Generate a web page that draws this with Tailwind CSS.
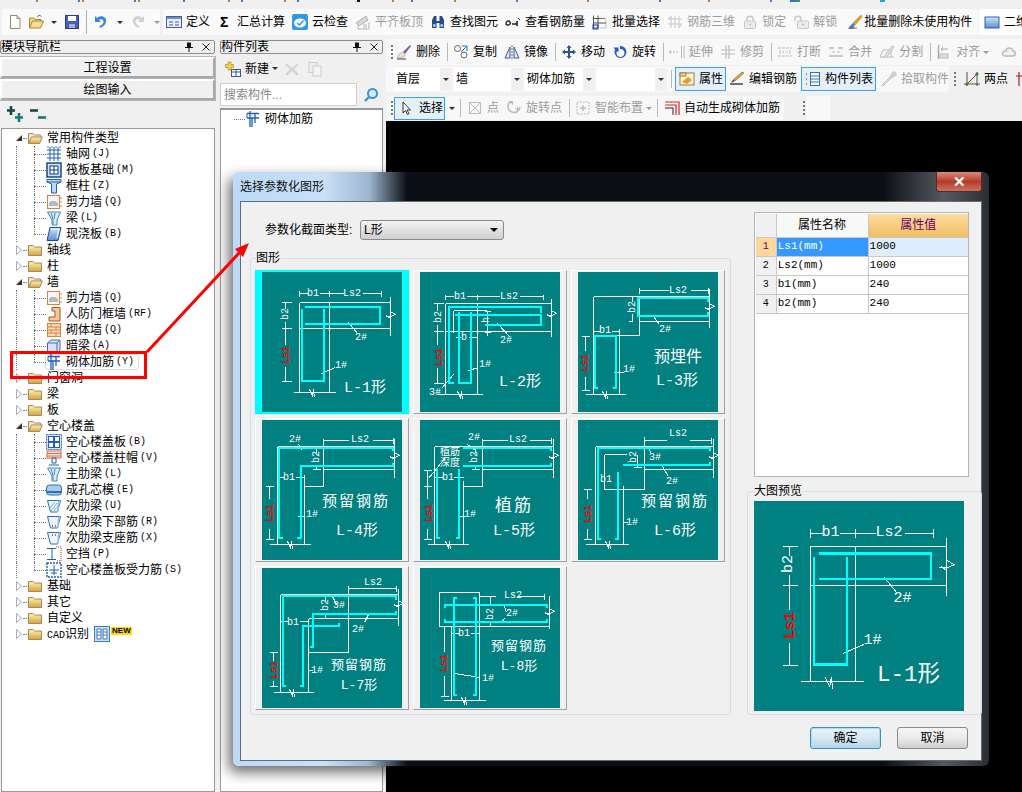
<!DOCTYPE html>
<html lang="en">
<head>
  <meta charset="UTF-8">
  <title>选择参数化图形</title>
  <script src="https://cdn.jsdelivr.net/npm/@tailwindcss/browser@4"></script>
</head>
<body class="bg-[#f0f0f0]">
<div id="app" class="relative flex h-[792px] w-[1022px] flex-col overflow-hidden bg-[#f0f0f0] font-['Liberation_Sans','Noto_Sans_CJK_SC',sans-serif] text-[12px] leading-none text-black">

  <svg width="0" height="0" class="absolute">
    <defs>
      <linearGradient id="fold" x1="0" y1="0" x2="0" y2="1"><stop offset="0" stop-color="#fff3b8"/><stop offset="1" stop-color="#e0a030"/></linearGradient>
      <linearGradient id="blue" x1="0" y1="0" x2="0" y2="1"><stop offset="0" stop-color="#cfe2f8"/><stop offset="1" stop-color="#5d8fd0"/></linearGradient>
    </defs>
  </svg>

  <!-- cut off menu bar -->
  <div id="menuMarks" class="h-[9px] shrink-0"></div>

  <div id="mainToolbar" class="flex h-[26px] shrink-0 items-center"></div>

  <div class="flex min-h-0 flex-1">
    <!-- module nav -->
    <div class="flex w-[215px] shrink-0 flex-col pt-[5px]">
      <div id="navHead"></div>
      <button class="mt-[3px] h-[21px] shrink-0 border-2 border-[#a8a8a8] border-l-white border-t-white bg-[#f0f0f0] outline outline-1 outline-[#b5b5b5]">工程设置</button>
      <button class="mt-px h-[21px] shrink-0 border-2 border-[#a8a8a8] border-l-white border-t-white bg-[#f0f0f0] outline outline-1 outline-[#b5b5b5]">绘图输入</button>
      <div class="flex h-[28px] shrink-0 items-center gap-[7px] pl-[7px]" id="expandIcons"></div>
      <div id="tree" class="ml-px min-h-0 flex-1 border border-[#9a9a9a] bg-white pt-[1px]"></div>
    </div>

    <!-- component list -->
    <div class="ml-[5px] flex w-[163px] shrink-0 flex-col pt-[5px]">
      <div id="listHead"></div>
      <div id="listTools" class="mt-[2px] flex h-[25px] shrink-0 items-center pl-[5px]"></div>
      <div class="mt-[2px] flex h-[23px] shrink-0 items-center">
        <div class="flex h-[23px] w-[137px] items-center border border-[#d0d0d0] bg-white pl-[3px] text-[#8a8a8a]">搜索构件...</div>
        <span id="searchIcon" class="ml-[6px]"></span>
      </div>
      <div id="compList" class="mt-[2px] min-h-0 flex-1 border border-t-2 border-[#9a9a9a] bg-white pl-[13px] pt-[1px]"></div>
    </div>

    <!-- drawing tools and canvas -->
    <div class="ml-[3px] flex min-w-0 flex-1 flex-col pt-[4px]">
      <div id="rowEdit" class="flex h-[26px] shrink-0 items-center gap-[7px] whitespace-nowrap rounded-l-[3px] bg-[#f8f8f8] pl-[5px]"></div>
      <div class="mt-px flex h-[26px] shrink-0 items-center whitespace-nowrap">
        <div id="rowProps" class="flex h-[26px] w-[567px] items-center rounded-[3px] bg-[#f8f8f8] pl-[8px]"></div>
        <div id="rowDraw" class="flex h-[26px] flex-1 items-center gap-[8px] pl-[5px]"></div>
      </div>
      <div class="mt-[4px] flex h-[24px] shrink-0 items-center whitespace-nowrap">
        <div id="rowSelect" class="flex h-[24px] w-[398px] items-center gap-[7px] rounded-[3px] bg-[#f8f8f8] pl-[5px]"></div>
        <span class="ml-[19px] h-[14px] w-[2px] border-l-2 border-dotted border-[#777]"></span>
        <span class="ml-px h-[24px] w-[24px] bg-[#f8f8f8]"></span>
      </div>
      <div class="mt-px min-h-0 flex-1 bg-black"></div>
    </div>
  </div>

  <!-- dialog -->
  <div class="absolute left-[233px] top-[172px] flex h-[594px] w-[756px] flex-col rounded-[6px] bg-[linear-gradient(90deg,#bcd9f6_0%,#c9e0f7_12%,#9db6cf_18%,#0b0f14_23%,#0b0f14_86%,#555a60_94%,#2a2e33_100%)] px-[7px] pb-[5px] shadow-[-4px_6px_14px_rgba(0,0,0,0.6)]">
    <div class="relative flex h-[29px] shrink-0 items-center">
      <span class="text-[12px] text-[#111]">选择参数化图形</span>
      <span class="absolute -right-[0px] top-0 flex h-[20px] w-[46px] items-center justify-center rounded-b-[3px] border border-t-0 border-[#5a2a24] bg-linear-to-b from-[#d98a7c] via-[#b8392a] to-[#c9705f] text-[15px] font-bold text-white">✕</span>
    </div>
    <div class="flex min-h-0 flex-1 flex-col border border-[#5d6d7c] bg-[#f0f0f0]">
      <div class="flex h-[513px] shrink-0">
        <div class="ml-[9px] flex w-[481px] shrink-0 flex-col pt-[18px]">
          <div class="flex h-[20px] shrink-0 items-center pl-[15px]">
            <span class="w-[95px]">参数化截面类型:</span>
            <div class="flex h-[20px] w-[144px] items-center justify-between rounded-[3px] border border-[#8a8a8a] bg-linear-to-b from-[#f4f4f4] to-[#cfcfcf] pl-[3px] pr-[5px]">
              <span>L形</span><span class="h-0 w-0 border-x-[4px] border-t-[4px] border-x-transparent border-t-black"></span>
            </div>
          </div>
          <div class="relative mt-[18px] h-[457px] rounded-[3px] border border-[#d5dfe5] pl-[4px] pt-[11px]">
            <span class="absolute -top-[7px] left-[5px] bg-[#f0f0f0] pr-[1px]">图形</span>
            <div id="tiles" class="grid grid-cols-[repeat(3,154px)] gap-x-[4px] gap-y-[4px]"></div>
          </div>
        </div>
        <div class="ml-[16px] flex w-[235px] shrink-0 flex-col pt-[10px]">
          <div class="ml-[7px] h-[265px] w-[215px] shrink-0 border border-[#b5b5b5] bg-white p-px">
            <table class="w-[212px] table-fixed border-collapse text-[12px]">
              <colgroup><col class="w-[20px]"><col class="w-[91px]"><col class="w-[99px]"></colgroup>
              <thead>
                <tr class="h-[23px]">
                  <th class="border border-[#c8c8c8] border-l-0 border-t-0 bg-[#f0f0f0]"></th>
                  <th class="border border-[#c8c8c8] border-t-0 bg-[#f8f8f8] font-normal">属性名称</th>
                  <th class="border border-[#c8c8c8] border-r-0 border-t-0 bg-linear-to-b from-[#fbdca0] to-[#f0bd60] font-normal text-[#660066]">属性值</th>
                </tr>
              </thead>
              <tbody id="propRows" class="font-['Liberation_Mono','Noto_Sans_CJK_SC',monospace] text-[10px]"></tbody>
            </table>
          </div>
          <div class="relative mt-[14px] h-[224px] rounded-[3px] border border-[#d5dfe5] pl-[6px] pt-[9px]">
            <span class="absolute -top-[7px] left-[6px] bg-[#f0f0f0] pr-[1px]">大图预览</span>
            <div id="preview" class="h-[210px] w-[210px]"></div>
          </div>
        </div>
      </div>
      <div class="flex justify-end gap-[16px] pr-[13px] pt-[12px]">
        <button class="h-[22px] w-[71px] rounded-[3px] border border-[#3c8fc0] bg-linear-to-b from-[#e8f3fa] via-[#d8e8f2] to-[#b6d3e4] shadow-[inset_0_0_0_1px_#a8dcf5]">确定</button>
        <button class="h-[22px] w-[71px] rounded-[3px] border border-[#8a8a8a] bg-linear-to-b from-[#f5f5f5] via-[#ebebeb] to-[#cfcfcf]">取消</button>
      </div>
    </div>
  </div>

  <!-- red annotation over everything -->
  <svg class="pointer-events-none absolute left-0 top-0" width="1022" height="792">
    <rect x="11.5" y="352.5" width="134" height="25" fill="none" stroke="#fe0000" stroke-width="3"/>
    <path d="M147,352L240,252" stroke="#fe0000" stroke-width="3" fill="none"/>
    <path d="M249,243L235,249L243,257Z" fill="#fe0000"/>
  </svg>
</div>

<script>
  const svg = (inner, w = 16, h = 16) => `<svg width="${w}" height="${h}" viewBox="0 0 16 16" class="shrink-0">${inner}</svg>`;
  const B = '#1f5fb8', O = '#d8843c', G = '#b4b4b4';

  const funnel = (extra = '') => `<path d="M1.5,2H14.5L11,10V15H6V10Z" fill="#dcecfb" stroke="#3f86cc"/><path d="M5,3L7,9V14M9,3L8,9" stroke="#3f86cc" fill="none"/>${extra}`;
  const cup = (extra = '') => `<path d="M1.5,2.5H14.5L11.5,14H4.5Z" fill="#eef6fd" stroke="#2a6fc0"/><path d="M12,3L14,2L12.5,13L11,14Z" fill="#8fc0ee"/>${extra}`;

  const icons = {
    file: `<path d="M3.5,1.5H10L13,4.5V14.5H3.5Z" fill="#fffef2" stroke="#8a8a8a"/><path d="M10,1.5V4.5H13" fill="#ddd" stroke="#8a8a8a"/>`,
    open: `<path d="M1.5,14V4H6L7,5.5H13V7" fill="#f4d68a" stroke="#a8853a"/><path d="M1.5,14L4.5,7H15.5L12.5,14Z" fill="#f7dc90" stroke="#a8853a"/><path d="M9,3C10,1 12,1 13.5,2.5" stroke="#3a7ad0" fill="none"/>`,
    save: `<rect x="1.5" y="1.5" width="13" height="13" fill="#4a62b0" stroke="#2c3d7c"/><rect x="4" y="2" width="8" height="5" fill="#fff"/><rect x="5" y="10" width="6" height="4" fill="#9fb0de"/>`,
    undo: `<path d="M4,4C8,0.5 14,3 13,8C12.5,11 10,13 7,14L6.5,12C9,11 10.5,9.5 10.5,7.5C10.5,5 7.5,4.5 6,6L8,8H2V2Z" fill="#3a86d8"/>`,
    redo: `<path d="M12,4C8,0.5 2,3 3,8C3.5,11 6,13 9,14L9.5,12C7,11 5.5,9.5 5.5,7.5C5.5,5 8.5,4.5 10,6L8,8H14V2Z" fill="#d0d0d0"/>`,
    define: `<rect x="0.5" y="2.5" width="15" height="11" fill="#e8f0fb" stroke="#3d5d9c"/><rect x="1" y="3" width="14" height="2" fill="#6f8fc8"/><path d="M3,8H7M3,11H7M9,8H13M9,11H13" stroke="#3d5d9c"/>`,
    cloud: `<rect width="16" height="16" rx="2" fill="#2f9be0"/><ellipse cx="8" cy="9" rx="6" ry="4.6" fill="#fff"/><path d="M5,9L7.5,11L11.5,6.5" stroke="#2f9be0" stroke-width="1.6" fill="none"/>`,
    level: `<path d="M1,9L11,2L13,6L4,12Z" fill="#d6d6d6" stroke="${G}"/><path d="M3,12V15H14V8" fill="none" stroke="${G}"/><path d="M8,11H12M8,13H12" stroke="${G}"/>`,
    binoc: `<path d="M2,6L4,2H6.5V7H9.5V2H12L14,6V14H9.5V9H6.5V14H2Z" fill="#2c4a86"/><path d="M3,10H5.5V13H3ZM10.5,10H13V13H10.5Z" fill="#9cc0ee"/>`,
    viewbar: `<path d="M1,10C1,7 4,6 5,8C6,10 4,11 3,11C2,11 1,11 1,10Z" fill="none" stroke="#222" stroke-width="1.4"/><path d="M7,10H12M12,7V12" stroke="#222" stroke-width="1.6"/><path d="M13,4L15,6" stroke="#222"/>`,
    batch: `<path d="M1.5,1.5V14.5M1.5,4.5H12M1.5,9H14M6,1.5V14M1.5,14H6" stroke="#555" fill="none"/><rect x="1" y="11" width="5" height="4" fill="none" stroke="#2233aa"/><path d="M8,4.5H14V14H8" stroke="#888" stroke-dasharray="1 1" fill="none"/>`,
    rebar3d: `<path d="M1,5H15M1,10H15M4,2V14M8,2V14M12,2V14M1,5L4,2M12,14L15,10" stroke="#c8c8c8" fill="none"/>`,
    lock: `<path d="M5,7V4.5C5,1.5 11,1.5 11,4.5V7" stroke="#c8c8c8" stroke-width="1.5" fill="none"/><rect x="2.5" y="7" width="11" height="7.5" rx="1" fill="#ececec" stroke="#c8c8c8"/><circle cx="8" cy="10.5" r="1" fill="#bbb"/>`,
    unlock: `<path d="M2,7V4.5C2,1.5 8,1.5 8,4.5V7" stroke="#c8c8c8" stroke-width="1.5" fill="none"/><rect x="4.5" y="7" width="11" height="7.5" rx="1" fill="#ececec" stroke="#c8c8c8"/><circle cx="10" cy="10.5" r="1" fill="#bbb"/>`,
    brush: `<path d="M14,1L6,9L8,11L15,3Z" fill="#e8a030" stroke="#a86a10" stroke-width=".5"/><path d="M6,9L3,12L1,15H6L8,11Z" fill="#3a86d8"/><path d="M2,14L10,14" stroke="#c04040"/>`,
    view2d: `<rect x="1" y="3" width="14" height="11" fill="url(#blue)" stroke="#3060a8"/>`,
    erase: `<path d="M14,1L7,8L9,10L15,2Z" fill="#7a5ab0"/><path d="M7,8L3,10L1,14L8,13L9,10Z" fill="#f0e0d0" stroke="#a08878" stroke-width=".5"/><path d="M1,15H10" stroke="#444"/>`,
    copy: `<circle cx="4.5" cy="4.5" r="3" fill="none" stroke="#666"/><circle cx="11" cy="11" r="3" fill="none" stroke="#666"/><path d="M9,2H14V7M14,2L8,8" stroke="#2f74c8" fill="none"/>`,
    mirror: `<path d="M8,1V15" stroke="#666" stroke-dasharray="2 1"/><path d="M6,3L1,14H6ZM10,3L15,14H10Z" fill="#dfe8f4" stroke="#3a5a90"/>`,
    move: `<path d="M8,1L10.5,4H9V7H12V5.5L15,8L12,10.5V9H9V12H10.5L8,15L5.5,12H7V9H4V10.5L1,8L4,5.5V7H7V4H5.5Z" fill="#27558f"/>`,
    rotate: `<path d="M8,2A6,6 0 1 1 3,5.5L1.5,3.5H6.5V8.5L5,7A4,4 0 1 0 8,5Z" fill="#2a5fc0"/>`,
    extend: `<path d="M1,8H10" stroke="#b8b8b8" stroke-dasharray="2 1"/><path d="M12.5,2V14M15,2V14" stroke="#b8b8b8"/><path d="M1,6V10" stroke="#b8b8b8"/>`,
    trim: `<path d="M1,6H15M1,10H15" stroke="#c0c0c0"/><path d="M6,1V15M9,1V15" stroke="#b0b0b0"/>`,
    cut: `<path d="M1,4H15M1,12H15" stroke="#bbb" stroke-dasharray="3 1"/><path d="M3,6V10M13,6V10M5,8H7M9,8H11" stroke="#bbb"/>`,
    merge: `<path d="M1,12H15M1,4H6M10,4H15" stroke="#bbb" stroke-width="1.4"/><path d="M4,8H7M9,8H12" stroke="#bbb"/>`,
    split: `<path d="M1,13H15M1,13L4,6H12V13" stroke="#bbb" fill="none"/><path d="M4,14L13,2L15,3L7,14" fill="#e2e2e2" stroke="#bbb"/>`,
    align: `<path d="M2.5,1V15" stroke="#aaa" stroke-width="1.5"/><rect x="4" y="10" width="8" height="4" fill="#ddd" stroke="#bbb"/><path d="M12,5H5M7,3L5,5L7,7" stroke="#aaa" fill="none"/>`,
    offset: `<path d="M4,12C0,12 1,6 5,7C5,3 11,3 12,7C15,7 15,12 12,12Z" fill="#f0f0f0" stroke="#bbb" stroke-width="1.4"/>`,
    prop: `<rect x="1" y="2" width="14" height="12" fill="#fff6d8" stroke="#9c7a3a"/><rect x="1" y="2" width="6" height="3" fill="#f7dc90" stroke="#9c7a3a"/><path d="M3,11L9,6L13,9L8,13Z" fill="#e89a30"/>`,
    edit: `<path d="M15,2L6,10L4,9L13,1Z" fill="#d8a040" stroke="#8a6a20" stroke-width=".6"/><path d="M4,9L2,12L6,10Z" fill="#333"/><path d="M1,13H14" stroke="#333" stroke-width="1.4"/>`,
    list: `<path d="M1,3H3M1,8H3M1,13H3" stroke="#333" stroke-dasharray="1 1"/><rect x="5.5" y="1.5" width="9" height="13" fill="#fff" stroke="#3a6fb0"/><path d="M5.5,5H14.5M5.5,8H14.5M5.5,11H14.5" stroke="#3a6fb0"/>`,
    pick: `<path d="M15,1L12,0L8,6L10,8L16,4Z" fill="#d0d0d0"/><path d="M9,6L2,13L1,15L3,14L10,7" fill="#eee" stroke="#bbb"/>`,
    twop: `<path d="M2,14L14,2" stroke="#a83030"/><path d="M3,1V15M13,1V15M0,13H16" stroke="#2a2a2a" stroke-width=".8"/><circle cx="3" cy="13" r="1.6" fill="#2a8a2a"/><circle cx="13" cy="3" r="1.6" fill="#2a8a2a"/>`,
    cross: `<path d="M3,1V15M8,1V15M0,5H12" stroke="#a82020" stroke-width="1.2"/>`,
    pointer: `<path d="M5,2V13L7.5,10.5L9.5,14.5L11,13.7L9,10H12.5Z" fill="#fff" stroke="#333"/>`,
    point: `<rect x="2.5" y="2.5" width="11" height="11" fill="none" stroke="#bdbdbd"/><path d="M2.5,2.5L13.5,13.5M13.5,2.5L2.5,13.5" stroke="#bdbdbd"/>`,
    rotpt: `<path d="M4,2A6,6 0 1 0 14,7" fill="none" stroke="#bbb" stroke-width="1.6"/><path d="M2,1H7V5Z" fill="#bbb"/><path d="M9,9H14M11.5,7V12" stroke="#bbb"/>`,
    smart: `<rect x="2" y="2" width="12" height="12" fill="none" stroke="#bbb" stroke-dasharray="2 1"/><path d="M5,8H11M8,5V11" stroke="#bbb" stroke-width="1.4"/>`,
    auto: `<path d="M1,2H15V15M1,5H12V15" fill="none" stroke="#e02020" stroke-width="1.2"/><path d="M1,8H9V15" fill="none" stroke="#222"/>`,
    newItem: `<path d="M3,1H6V3.5H8.5V6.5H6V9H3V6.5H.5V3.5H3Z" fill="#f0d040" stroke="#a88a20" stroke-width=".6"/><rect x="6.5" y="8.5" width="9" height="7" fill="#f4f7fc" stroke="#3a5a90"/><path d="M6.5,11H15.5M11,9V15" stroke="#3a5a90"/>`,
    del: `<path d="M2,2L8,7L14,2L14.5,4L10,8L14.5,13L12.5,14.5L8,10L3,14.5L1.5,13L6,8L1,4Z" fill="#d4d4d4"/>`,
    dup: `<rect x="2" y="1.5" width="8" height="10" fill="#eee" stroke="#ccc"/><rect x="6" y="5" width="8" height="10" fill="#f4f4f4" stroke="#ccc"/>`,
    search: `<circle cx="9.5" cy="6.5" r="4.5" fill="#d8ecfa" stroke="#3a90d8" stroke-width="2"/><path d="M6,10L2,14" stroke="#3a90d8" stroke-width="2.4"/>`,
    plusplus: `<path d="M4,0V9M0,4.5H8" stroke="#124a4a" stroke-width="2.6"/><path d="M12,7V16M8,11.5H16" stroke="#127a7a" stroke-width="2.6"/>`,
    minusminus: `<path d="M0,4.5H8" stroke="#124a4a" stroke-width="2.6"/><path d="M8,11.5H16" stroke="#127a7a" stroke-width="2.6"/>`,

    // tree icons
    axis: `<path d="M1,4H15M1,8H15M1,12H15M4,1V15M8,1V15M12,1V15" stroke="${B}" fill="none"/><path d="M1,1H3M5,1H7M9,1H11M13,1H15" stroke="#3a90d8"/>`,
    raft: `<rect x="1" y="1" width="14" height="14" fill="#cfe2f6" stroke="#123a80" stroke-width="1.4"/><rect x="4" y="4" width="8" height="8" fill="#fff" stroke="#123a80"/><path d="M8,4V12M4,8H12" stroke="#123a80"/>`,
    column: `<path d="M1,1.5H15V4L10.5,6V15H5.5V6L1,4Z" fill="#bcd8f4" stroke="${B}"/><path d="M1,4H15" stroke="${B}"/>`,
    shear: `<rect x="1.5" y="1.5" width="12" height="13" fill="#f6f6f6" stroke="${O}"/><path d="M3,12H12V9L9,7H5L3,9Z" fill="#b8b8b8"/><path d="M15,3V5M15,7V9M15,11V13" stroke="${O}"/>`,
    beam: funnel(),
    slab: `<path d="M4,1.5H15L12,14.5H1Z" fill="url(#blue)" stroke="#174a9c"/><path d="M5,3H13L11,12" stroke="#fff" fill="none"/>`,
    door: `<path d="M6,1.5H14V15H3V11H9V5H6Z" fill="#f4c99a" stroke="#a35a1c"/>`,
    brick: `<rect x="1.5" y="1.5" width="13" height="13" fill="#f8d8b8" stroke="${O}"/><path d="M1.5,5H14.5M1.5,8H14.5M1.5,11H14.5M5,1.5V5M10,5V8M5,8V11M10,11V14.5" stroke="${O}"/>`,
    hidden: `<path d="M1.5,5L5,2H14V12L11,15H1.5Z" fill="#d6e6f6" stroke="#3a6fb0"/><path d="M1.5,5H11V15M11,5L14,2" stroke="#3a6fb0" fill="none"/>`,
    wallbar: `<path d="M2,2.5H14M2,7H14M5,0V16M10,2V12M7,16V7" stroke="${B}" stroke-width="1.3" fill="none"/><path d="M2,2.5V7" stroke="${B}"/>`,
    hollow: `<rect x=".5" y=".5" width="15" height="15" fill="#cfe2f6" stroke="#3a6fb0" stroke-dasharray="2 1"/><rect x="2.5" y="2.5" width="5" height="5" fill="#fff" stroke="${B}"/><rect x="8.5" y="2.5" width="5" height="5" fill="#fff" stroke="${B}"/><rect x="2.5" y="8.5" width="5" height="5" fill="#fff" stroke="${B}"/><rect x="8.5" y="8.5" width="5" height="5" fill="#fff" stroke="${B}"/>`,
    cap: `<rect x="1" y="1" width="14" height="7" fill="#fde8dc" stroke="#d86a4a"/><path d="M1,3.5H15M1,6H15" stroke="#d86a4a"/><path d="M6,8H10V13H6ZM3,15H13" stroke="${B}" fill="none"/>`,
    rib: funnel(),
    core: `<rect x=".5" y="3" width="15" height="10" rx="3" fill="#aaccee" stroke="#2a6fb0"/><path d="M1,10H15" stroke="#2a6fb0" stroke-width="2"/>`,
    sec: cup(`<path d="M4,10L9,4M5,13L11,5M8,13L12,8" stroke="#7ab0e6"/>`),
    secDown: cup(`<path d="M6,12H7M9,12H10" stroke="#d02020" stroke-width="1.5"/>`),
    secTop: cup(`<path d="M6,5H7M9,5H10" stroke="#d02020" stroke-width="1.5"/>`),
    gap: `<path d="M1,2.5H10M1,13.5H10" stroke="${B}"/><path d="M6,3V13" stroke="${B}"/><path d="M10,1H15V15H10" stroke="#c03030" stroke-dasharray="1 1" fill="none"/>`,
    force: `<rect x="1" y="1" width="14" height="14" fill="#fff" stroke="${B}" stroke-dasharray="2 1" stroke-width="1.4"/><path d="M3,8H13M8,3V13M5,11H11" stroke="${B}"/>`,
    cad: `<rect x=".5" y=".5" width="15" height="15" fill="#cfe2f6" stroke="#3a78c0"/><path d="M3,3H7V13H3ZM9,3H13V13H9ZM3,6H7M3,9H7M9,6H13M9,9H13" stroke="#3a78c0" fill="#fff"/>`,
    folder: `<path d="M1.5,13.5V3.5H6L7.5,5H14.5V13.5Z" fill="url(#fold)" stroke="#9a8a68"/>`,
    folderOpen: `<path d="M1.5,13.5V3.5H6L7.5,5H13.5V7" fill="#f6e8c0" stroke="#9a8a68"/><path d="M1.5,13.5L4.5,7H15.5L12.5,13.5Z" fill="url(#fold)" stroke="#9a8a68"/>`
  };

  const sep = '<span class="h-[18px] w-px shrink-0 bg-[#b8b8b8] -mr-[2px]"></span>';
  const sepB = '<span class="h-[18px] w-px shrink-0 bg-[#b8b8b8] -mr-[1px]"></span>';
  const grip = '<span class="h-[14px] w-[2px] shrink-0 border-l-2 border-dotted border-[#777]"></span>';
  const arrow = '<span class="h-0 w-0 shrink-0 border-x-[3px] border-t-[3px] border-x-transparent border-t-[#333]"></span>';
  const grayArrow = '<span class="h-0 w-0 shrink-0 border-x-[3px] border-t-[3px] border-x-transparent border-t-[#999]"></span>';

  const tool = (icon, text, cls = '') => `<span class="flex shrink-0 items-center gap-[4px] ${cls}">${svg(icons[icon])}${text ? `<span>${text}</span>` : ''}</span>`;
  const off = (icon, text) => tool(icon, text, 'text-[#9c9c9c]');

  document.getElementById('menuMarks').innerHTML = `<svg width="1022" height="2">${
    [36,78,82,134,138,183,228,241,284,297,392,411,454,516,587,659,708,770]
      .map((x, i) => `<rect x="${x}" y="0" width="2" height="2" fill="${i % 2 ? '#3a7ad0' : '#c87a30'}"/>`).join('')
  }<rect x="357" y="0" width="3" height="2" fill="#111"/><rect x="790" y="0" width="7" height="2" fill="#2f74c8"/><rect x="797" y="0" width="3" height="2" fill="#3aa030"/><rect x="880" y="0" width="5" height="2" fill="#2f9be0"/></svg>`;

  document.getElementById('mainToolbar').innerHTML = `
    <div class="ml-[2px] flex h-[26px] w-[158px] shrink-0 items-center rounded-t-[3px] bg-[#fafafa] pl-[5px]">
      ${svg(icons.file)}<span class="ml-[5px]">${svg(icons.open)}</span><span class="ml-[7px] flex">${arrow}</span>
      <span class="ml-[7px]">${svg(icons.save)}</span><span class="ml-[6px] h-[24px] w-px bg-[#b0b0b0]"></span>
      <span class="ml-[6px]">${svg(icons.undo)}</span><span class="ml-[8px] flex">${arrow}</span>
      <span class="ml-[7px]">${svg(icons.redo)}</span><span class="ml-[8px] flex">${grayArrow}</span>
    </div>
    <div class="ml-[3px] flex h-[26px] w-[815px] shrink-0 items-center gap-[7px] whitespace-nowrap rounded-t-[3px] bg-[#fafafa] pl-[3px]">
      ${tool('define', '定义')}
      <span class="ml-[3px] flex items-center gap-[7px]"><span class="w-[10px] text-[14px] font-bold">Σ</span><span>汇总计算</span></span>
      ${tool('cloud', '云检查')}
      ${off('level', '平齐板顶')}
      ${tool('binoc', '查找图元')}
      ${tool('viewbar', '查看钢筋量')}
      ${tool('batch', '批量选择')}
      ${off('rebar3d', '钢筋三维')}
      ${off('lock', '锁定')}
      ${off('unlock', '解锁')}
      <span class="ml-[3px] flex items-center gap-px">${svg(icons.brush)}<span>批量删除未使用构件</span></span>
    </div>
    <div class="ml-px flex h-[26px] flex-1 items-center gap-[4px] whitespace-nowrap rounded-tl-[3px] bg-white pl-[5px]">${svg(icons.view2d)}<span>二维</span></div>`;

  const panelHead = (title) => `<div class="flex h-[14px] items-center justify-between rounded-[2px] border border-[#8e8e8e] bg-[#f0f0f0] pr-[4px]">
      <span class="text-[12px]">${title}</span>
      <span class="flex items-center gap-[9px]"><svg width="8" height="10"><path d="M2,0.5H6V5H8V6H4.5V10H3.5V6H0V5H2Z" fill="#111"/></svg><svg width="8" height="8"><path d="M.5,.5L7.5,7.5M7.5,.5L.5,7.5" stroke="#222"/></svg></span>
    </div>`;
  document.getElementById('navHead').innerHTML = panelHead('模块导航栏');
  document.getElementById('listHead').innerHTML = panelHead('构件列表');
  document.getElementById('expandIcons').innerHTML = svg(icons.plusplus) + svg(icons.minusminus);
  document.getElementById('searchIcon').innerHTML = svg(icons.search);

  document.getElementById('listTools').innerHTML = `${svg(icons.newItem)}<span class="ml-[4px]">新建</span><span class="ml-[3px] flex">${arrow}</span><span class="ml-[6px]">${svg(icons.del)}</span><span class="ml-[7px]">${svg(icons.dup)}</span>`;
  document.getElementById('compList').innerHTML = `<div class="flex h-4 items-center"><span class="w-[11px] border-t border-dotted border-[#777]"></span>${svg(icons.wallbar)}<span class="ml-[4px]">砌体加筋</span></div>`;

  // Tree
  const dotted = 'border-dotted border-[#777]';
  const code = (c) => c ? `<span class="ml-[2px] font-['Liberation_Mono',monospace] text-[10px]">${c}</span>` : '';
  const root = (name, open, extra = '') => `<div class="flex h-4 items-center pl-[13px]">
      ${open
        ? '<svg width="8" height="8" class="shrink-0"><path d="M7,1V7H1Z" fill="#333"/></svg>'
        : '<svg width="8" height="10" class="shrink-0"><path d="M1.5,.5L6.5,5L1.5,9.5Z" fill="#fff" stroke="#aaa"/></svg>'}
      <span class="w-[4px] border-t ${dotted}"></span>${svg(open ? icons.folderOpen : icons.folder)}<span class="ml-[4px]">${name}</span>${extra}</div>`;
  const leaf = (icon, name, c, last, hot) => `<div class="flex h-4 items-center pl-[14px]">
      <span class="h-4 w-[18px] shrink-0 border-l ${dotted}"></span>
      <span class="relative h-4 w-[12px] shrink-0"><span class="absolute left-0 top-0 ${last ? 'h-[8px]' : 'h-4'} border-l ${dotted}"></span><span class="absolute left-0 top-[8px] w-full border-t ${dotted}"></span></span>
      <span class="flex h-[16px] items-center ${hot ? 'rounded-[3px] border border-[#dcdcdc] -ml-[1px] pr-[4px]' : ''}">${svg(icons[icon])}<span class="ml-[4px]">${name}</span>${code(c)}</span></div>`;

  const groups = [
    ['常用构件类型', [['axis','轴网','(J)'],['raft','筏板基础','(M)'],['column','框柱','(Z)'],['shear','剪力墙','(Q)'],['beam','梁','(L)'],['slab','现浇板','(B)']]],
    ['轴线'], ['柱'],
    ['墙', [['shear','剪力墙','(Q)'],['door','人防门框墙','(RF)'],['brick','砌体墙','(Q)'],['hidden','暗梁','(A)'],['wallbar','砌体加筋','(Y)',true]]],
    ['门窗洞'], ['梁'], ['板'],
    ['空心楼盖', [['hollow','空心楼盖板','(B)'],['cap','空心楼盖柱帽','(V)'],['rib','主肋梁','(L)'],['core','成孔芯模','(E)'],['sec','次肋梁','(U)'],['secDown','次肋梁下部筋','(R)'],['secTop','次肋梁支座筋','(X)'],['gap','空挡','(P)'],['force','空心楼盖板受力筋','(S)']]],
    ['基础'], ['其它'], ['自定义']
  ];
  document.getElementById('tree').innerHTML = groups.map(([name, kids]) =>
    root(name, !!kids) + (kids || []).map((k, i) => leaf(k[0], k[1], k[2], i === kids.length - 1, k[3])).join('')
  ).join('') + root(`<span class="font-['Liberation_Mono',monospace] text-[10px]">CAD</span>识别`, false,
    `<span class="ml-[5px]">${svg(icons.cad)}</span><span class="-mt-[6px] ml-[1px] bg-[#ffd800] px-px font-['Liberation_Sans',sans-serif] text-[8px] font-bold">NEW</span>`);

  // Tool rows
  document.getElementById('rowEdit').innerHTML = `${grip}
    <span class="-ml-[4px]">${tool('erase','删除')}</span>${sep}${tool('copy','复制')}${tool('mirror','镜像')}${sep}${tool('move','移动')}${tool('rotate','旋转')}${sep}
    ${off('extend','延伸')}${off('trim','修剪')}${sep}${off('cut','打断')}${off('merge','合并')}${off('split','分割')}${sep}
    <span class="flex items-center gap-[3px] text-[#9c9c9c]">${off('align','对齐')}${grayArrow}</span><span class="ml-[5px]">${off('offset','偏')}</span>`;

  const combo = (w, text, gap) => `<span class="flex h-[23px] ${w} items-center bg-white pl-[2px]">${text}</span><span class="flex h-[23px] w-[12px] items-center justify-center bg-[#f0f0f0] ${gap}">${arrow}</span>`;
  const hot = 'flex h-[24px] items-center gap-[4px] border border-[#3d9cf5] bg-[#e4f0fb]';
  document.getElementById('rowProps').innerHTML = `
    ${combo('w-[46px]','首层','mr-[2px]')}${combo('w-[57px]','墙','mr-[2px]')}${combo('w-[58px]','砌体加筋','mr-[2px]')}${combo('w-[58px]','','mr-[4px]')}
    <span class="h-[18px] w-px bg-[#b8b8b8]"></span>
    <span class="ml-[3px] w-[51px] pl-[3px] ${hot}">${svg(icons.prop)}属性</span>
    <span class="ml-[3px] flex items-center gap-[4px]">${svg(icons.edit)}编辑钢筋</span>
    <span class="ml-[4px] w-[75px] pl-[3px] ${hot}">${svg(icons.list)}构件列表</span>
    <span class="ml-[5px] flex items-center gap-[4px] text-[#9c9c9c]">${svg(icons.pick)}拾取构件</span>`;
  document.getElementById('rowDraw').innerHTML = `${grip}${tool('twop','两点')}${svg(icons.cross)}`;

  document.getElementById('rowSelect').innerHTML = `${grip}
    <span class="-ml-[6px] flex h-[23px] w-[51px] items-center gap-[5px] border border-[#3d9cf5] bg-[#e4f0fb] pl-[3px]">${svg(icons.pointer)}<span>选择</span></span>
    <span class="-ml-[3px] flex">${arrow}</span><span class="-ml-[2px] flex">${sepB}</span>
    ${off('point','点')}${off('rotpt','旋转点')}${sepB}
    <span class="-ml-px flex items-center gap-[3px]">${off('smart','智能布置')}${grayArrow}</span><span class="-ml-[2px] flex">${sepB}</span>
    ${tool('auto','自动生成砌体加筋')}`;

  // Property table
  const rows = [['1','Ls1(mm)','1000'],['2','Ls2(mm)','1000'],['3','b1(mm)','240'],['4','b2(mm)','240']];
  document.getElementById('propRows').innerHTML = rows.map((r, i) => `<tr class="h-[19px]">
      <td class="border border-[#c8c8c8] border-l-0 text-center ${i === 0 ? 'bg-[#fdd89a] text-[#660066]' : 'bg-[#f0f0f0]'}">${r[0]}</td>
      <td class="border border-[#c8c8c8] pl-[1px] text-[11px] ${i === 0 ? 'bg-[#3399ff] text-white' : ''}">${r[1]}</td>
      <td class="border border-[#c8c8c8] border-r-0 pl-[1px] text-[11px] ${i === 0 ? 'bg-[#deecfb]' : ''}">${r[2]}</td>
    </tr>`).join('');

  // Section drawings. l = white dimension lines, r = cyan rebar, t = [text, x, y, size, rotated, red, spacing]
  const bb = (x, y) => `M${x - 3},${y - 3}L${x},${y + 3}L${x + 1},${y - 3}L${x + 2},${y + 5}`;
  const rb = (x, y) => `M${x - 5},${y + 1}H${x}L${x + 5},${y - 1}L${x},${y - 4}M${x},${y + 3}L${x - 4},${y}`;
  const drawings = [
    { l: 'M37,30H128M37,56H128M37,30V120M67,30V120M31,120H73M128,24V63M37,18V24M67,18V24M119,18V24M37,21H46M57,21H81M100,21H119M23,30V36M23,49V72M23,94V109M19,30H29M19,56H29M19,109H29M86,50L95,61M59,101L73,95' + bb(50,120) + rb(128,43),
      r: 'M43,35H118V52H43M40,37V109H62V37',
      t: [['b1',51,21,10],['Ls2',90,21,10],['b2',23,42,10,1],['Ls1',24,83,10,1,1],['2#',99,65,10],['1#',79,93,10],['L-1形',103,116,15]] },
    { l: 'M25,31H131M25,59H131M25,31V122M57,31V122M16,122H62M131,26V64M25,22V27M57,22V27M123,22V27M25,24H33M46,24H79M99,24H123M17,31V38M17,52V72M17,95V111M13,31H23M13,59H23M13,111H23M33,38H66M33,38V60M67,39V63M64,39H70M64,60H70M35,65H40M48,65H57M77,51L90,65M48,98L58,95M33,102L21,116' + bb(40,122) + rb(131,42),
      r: 'M34,111H29V35H121V41M39,40V111H51V40M35,43H121V53H65',
      t: [['b1',40,24,10],['Ls2',89,24,10],['b2',18,45,10,1],['Ls1',19,85,10,1,1],['b',44,65,10],['h',66,48,10,1],['2#',86,68,10],['1#',65,92,10],['3#',15,120,10],['L-2形',100,110,15]] },
    { l: 'M15,24H131M15,24V122M41,63V122M15,63H61M61,24V63M61,49H131M131,16V55M7,122H47M61,15V21M130,15V21M61,18H90M112,18H130M54,24V29M54,41V49M50,49H54M15,59H22M33,59H41M41,56V62M7,64V78M7,104V118M3,64H11M3,118H11M75,44L81,52M35,100H45' + bb(27,122) + rb(131,35),
      r: 'M130,30V26H60V44H130V40M20,116H17V64H38V116H35',
      t: [['Ls2',100,18,10],['b2',54,35,10,1],['b1',27,58,10],['Ls1',7,91,10,1,1],['2#',87,57,10],['1#',51,97,10],['预埋件',100,86,16],['L-3形',99,109,15]] },
    { l: 'M15,26H132M15,26V124M61,18V66M42,66H61M132,18V57M61,49H132M42,60V124M7,124H48M61,20H86M110,20H131M131,17V23M54,26V32M54,45V49M50,49H58M15,57H22M33,57H42M42,54V60M7,66V78M7,108V119M3,66H11M3,119H11M36,24L40,30M35,96H42' + bb(28,124) + rb(132,36),
      r: 'M21,118H17V28H131V31M131,43V46H39V118H35',
      t: [['2#',33,19,10],['Ls2',98,19,10],['b2',54,37,10,1],['b1',27,57,10],['Ls1',8,93,10,1,1],['1#',50,94,10],['预留钢筋',94,82,15,0,0,2],['L-4形',95,111,15]] },
    { l: 'M14,26H133M14,26V124M62,18V66M43,66H62M133,18V57M62,49H133M43,60V124M7,124H48M62,20H87M109,20H131M131,17V23M55,26V32M55,45V49M51,49H59M14,57H22M33,57H43M7,50V78M7,108V119M3,50H11M3,66H11M3,119H11M39,96H44M25,37L8,58M47,24L55,30' + bb(28,124) + rb(133,36),
      r: 'M43,28H131V31M43,46H131V43M20,118H17V49M36,118H39V49',
      t: [['2#',54,17,10],['Ls2',98,19,10],['植筋',30,32,10],['深度',30,43,10],['b2',54,37,10,1],['b1',28,57,10],['Ls1',9,93,10,1,1],['1#',50,94,10],['植筋',94,86,17,0,0,2],['L-5形',94,111,15]] },
    { l: 'M17,26H135M17,26V124M66,16V69M26,69H66M26,34V69M26,34H48M45,65V124M135,18V57M66,49H135M7,124H50M66,20H88M111,20H133M133,17V23M59,34V47M55,47H63M9,69V78M9,108V119M5,69H13M5,119H13M70,28L73,33M84,46L90,56M45,102H49' + bb(30,124) + rb(135,36),
      r: 'M23,119H20V28H132V31M132,42V45H45M37,119H40V52',
      t: [['Ls2',100,13,10],['b2',55,37,10,1],['3#',77,37,10],['2#',94,61,10],['b1',28,59,10],['Ls1',10,94,10,1,1],['1#',54,102,10],['预留钢筋',97,82,15,0,0,2],['L-6形',97,111,15]] },
    { l: 'M18,26H136M18,26V124M86,17V84M46,84H86M46,50V124M46,50H136M136,20V57M11,124H51M86,20H134M134,17V23M63,26V32M63,45V50M59,50H67M18,53H26M37,53H46M11,84V92M11,112V118M7,84H15M7,118H15M70,28L74,36M106,46L102,54M46,102H50' + bb(30,124) + rb(136,36),
      r: 'M24,118H21V28H134V32M134,43V46H51V79H48M38,118H41V58H77V55',
      t: [['Ls2',111,14,10],['b2',63,37,10,1],['3#',77,37,10],['2#',96,61,10],['b1',31,54,10],['Ls1',12,102,10,1,1],['1#',55,102,10],['预留钢筋',97,97,13,0,0,1],['L-7形',97,117,13]] },
    { l: 'M19,24H59V58H19ZM31,58V132M59,58V132M23,132H65M59,28H75M97,28H124M124,25V31M59,58H129M129,27V60M70,28V37M70,52V58M66,58H74M31,65H38M50,65H59M34,105L60,109M84,38L86,44M84,50L81,54M24,58V83M24,107V128M20,128H28' + bb(44,132) + rb(129,44),
      r: 'M25,40V37H127V40M25,51V54H127V51M37,30H34V127H37M53,30H56V127H53',
      t: [['Ls2',93,27,10],['b2',70,46,10,1],['2#',92,45,10],['b1',44,65,10],['Ls1',24,95,10,1,1],['1#',68,110,10],['预留钢筋',99,78,13,0,0,1],['L-8形',99,98,13]] }
  ];

  const drawing = (d, px) => `<svg width="${px}" height="${px}" viewBox="0 0 140 140" class="block bg-[#008080]" font-family="'Liberation Mono','Noto Sans CJK SC',monospace">
      <path d="${d.l}" transform="translate(.5 .5)" fill="none" stroke="#fff" stroke-width="1" vector-effect="non-scaling-stroke" shape-rendering="crispEdges"/>
      <path d="${d.r}" fill="none" stroke="#00ffff" stroke-width="2.6" vector-effect="non-scaling-stroke" shape-rendering="crispEdges"/>
      ${d.t.map(([s, x, y, size, rot, red, sp]) => `<text x="${x}" y="${y}" font-size="${size}" text-anchor="middle" dominant-baseline="central" fill="${red ? '#ff0000' : '#fff'}" ${red ? 'font-weight="bold"' : ''} ${sp ? `letter-spacing="${sp}"` : ''} ${rot ? `transform="rotate(-90 ${x} ${y})"` : ''}>${s}</text>`).join('')}
    </svg>`;

  document.getElementById('tiles').innerHTML = drawings.map((d, i) => `<div class="flex h-[144px] w-[154px] items-center justify-center border pr-px ${i === 0 ? 'border-[#00ffff] bg-[#00ffff] outline outline-1 outline-[#e8e8e8]' : 'border-white border-b-[#a0a0a0] border-r-[#a0a0a0] bg-[#f0f0f0]'}">${drawing(d, 140)}</div>`).join('');
  document.getElementById('preview').innerHTML = drawing(drawings[0], 210);
</script>
</body>
</html>
